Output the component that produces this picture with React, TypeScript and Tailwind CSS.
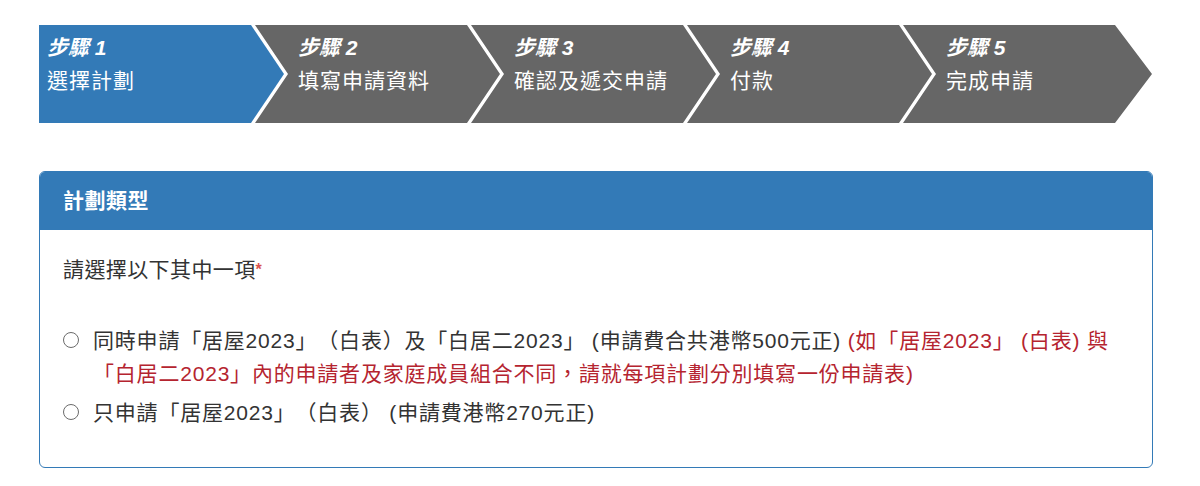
import React from "react";

const steps = [
  { label: "步驟 1", title: "選擇計劃" },
  { label: "步驟 2", title: "填寫申請資料" },
  { label: "步驟 3", title: "確認及遞交申請" },
  { label: "步驟 4", title: "付款" },
  { label: "步驟 5", title: "完成申請" },
];

function Radio() {
  return (
    <span className="mt-[8px] inline-block h-[16px] w-[16px] shrink-0 rounded-full border-[1.5px] border-[#6b6b6b] bg-white" />
  );
}

export default function App() {
  return (
    <div
      className="min-h-[486px] w-[1200px] bg-white text-[21px] text-[#333333] [text-spacing-trim:space-all]"
      style={{ fontFamily: '"Liberation Sans", "Noto Sans CJK TC", sans-serif' }}
    >
      <div className="pl-[39px] pt-[25px]">
        <div className="flex h-[98px]">
          {steps.map((s, i) => {
            const first = i === 0;
            const last = i === steps.length - 1;
            const clip = first
              ? "[clip-path:polygon(0_0,212px_0,245px_50%,212px_100%,0_100%)]"
              : last
              ? "[clip-path:polygon(0_0,212px_0,249px_50%,212px_100%,0_100%,33px_50%)]"
              : "[clip-path:polygon(0_0,212px_0,245px_50%,212px_100%,0_100%,33px_50%)]";
            return (
              <div
                key={i}
                className={`h-full w-[249px] shrink-0 pt-[6px] leading-[33px] text-white ${clip} ${
                  first ? "bg-[#337ab7] pl-[8px]" : "-ml-[33px] bg-[#666666] pl-[43px]"
                }`}
              >
                <div className="font-bold italic">{s.label}</div>
                <div className="tracking-[1px]">{s.title}</div>
              </div>
            );
          })}
        </div>
      </div>

      <div className="ml-[39px] mt-[48px] w-[1114px] overflow-hidden rounded-[6px] border-[1.5px] border-[#337ab7]">
        <div className="flex h-[58px] items-center bg-[#337ab7] px-[23px] font-bold tracking-[0.5px] text-white">
          計劃類型
        </div>
        <div className="px-[23px] pb-[38px] pt-[25px] tracking-[0.4px]">
          <div className="leading-[30px]">
            請選擇以下其中一項<span className="align-top text-[16px] font-bold text-[#d9534f]">*</span>
          </div>
          <div className="mt-[39px] flex items-start gap-[14px] leading-[33px] tracking-[0.8px]">
            <Radio />
            <div>
              同時申請「居屋2023」（白表）及「白居二2023」 (申請費合共港幣500元正){" "}
              <span className="text-[#b5242f]">
                (如「居屋2023」 (白表) 與「白居二2023」內的申請者及家庭成員組合不同，請就每項計劃分別填寫一份申請表)
              </span>
            </div>
          </div>
          <div className="mt-[6px] flex items-start gap-[14px] leading-[33px] tracking-[0.8px]">
            <Radio />
            <div>只申請「居屋2023」（白表） (申請費港幣270元正)</div>
          </div>
        </div>
      </div>
    </div>
  );
}
